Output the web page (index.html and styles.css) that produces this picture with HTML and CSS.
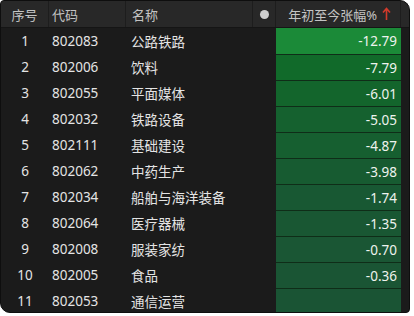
FILE: index.html
```html
<!DOCTYPE html>
<html lang="zh">
<head>
<meta charset="utf-8">
<link rel="stylesheet" href="styles.css">
</head>
<body>
<div class="panel">
  <div class="row head">
    <div class="c c1">序号</div>
    <div class="c c2">代码</div>
    <div class="c c3">名称</div>
    <div class="c c4"><span class="dot"></span></div>
    <div class="c c5">年初至今张幅%<svg class="arrow" width="9" height="14" viewBox="0 0 9 14"><path d="M4.5 13V2M1 5.5L4.5 1.5L8 5.5" fill="none" stroke="#d23a2b" stroke-width="1.6"/></svg></div>
    <div class="c c6"></div>
  </div>
  <div class="row"><div class="c c1">1</div><div class="c c2">802083</div><div class="c c3">公路铁路</div><div class="c c4"></div><div class="c c5 v" style="background:#1b8a38">-12.79</div><div class="c c6"></div></div>
  <div class="row"><div class="c c1">2</div><div class="c c2">802006</div><div class="c c3">饮料</div><div class="c c4"></div><div class="c c5 v" style="background:#116a2a">-7.79</div><div class="c c6"></div></div>
  <div class="row"><div class="c c1">3</div><div class="c c2">802055</div><div class="c c3">平面媒体</div><div class="c c4"></div><div class="c c5 v" style="background:#13652c">-6.01</div><div class="c c6"></div></div>
  <div class="row"><div class="c c1">4</div><div class="c c2">802032</div><div class="c c3">铁路设备</div><div class="c c4"></div><div class="c c5 v" style="background:#15612f">-5.05</div><div class="c c6"></div></div>
  <div class="row"><div class="c c1">5</div><div class="c c2">802111</div><div class="c c3">基础建设</div><div class="c c4"></div><div class="c c5 v" style="background:#165f30">-4.87</div><div class="c c6"></div></div>
  <div class="row"><div class="c c1">6</div><div class="c c2">802062</div><div class="c c3">中药生产</div><div class="c c4"></div><div class="c c5 v" style="background:#175b31">-3.98</div><div class="c c6"></div></div>
  <div class="row"><div class="c c1">7</div><div class="c c2">802034</div><div class="c c3">船舶与海洋装备</div><div class="c c4"></div><div class="c c5 v" style="background:#185833">-1.74</div><div class="c c6"></div></div>
  <div class="row"><div class="c c1">8</div><div class="c c2">802064</div><div class="c c3">医疗器械</div><div class="c c4"></div><div class="c c5 v" style="background:#195733">-1.35</div><div class="c c6"></div></div>
  <div class="row"><div class="c c1">9</div><div class="c c2">802008</div><div class="c c3">服装家纺</div><div class="c c4"></div><div class="c c5 v" style="background:#1a5634">-0.70</div><div class="c c6"></div></div>
  <div class="row"><div class="c c1">10</div><div class="c c2">802005</div><div class="c c3">食品</div><div class="c c4"></div><div class="c c5 v" style="background:#1a5534">-0.36</div><div class="c c6"></div></div>
  <div class="row last"><div class="c c1">11</div><div class="c c2">802053</div><div class="c c3">通信运营</div><div class="c c4"></div><div class="c c5 v" style="background:#1a5434"></div><div class="c c6"></div></div>
</div>
</body>
</html>
```
FILE: styles.css
```css
html, body {
  margin: 0;
  padding: 0;
  background: #ffffff;
}
body {
  width: 414px;
  height: 316px;
  overflow: hidden;
}
.panel {
  width: 408px;
  height: 311px;
  background: #1b1b1b;
  border: 1px solid #0e0e0e;
  border-radius: 4px 10px 4px 10px;
  overflow: hidden;
  font-family: "Noto Sans", "Noto Sans CJK SC", sans-serif;
  color: #e4e4e4;
}
.row {
  display: grid;
  grid-template-columns: 48px 77px 127px 23px 125px 1fr;
  height: 26px;
  font-size: 13.5px;
}
.row.head {
  height: 26px;
  background: #282828;
  color: #c4c4c4;
  font-size: 13px;
  border-bottom: 1px solid #151515;
}
.c {
  display: flex;
  align-items: center;
  white-space: nowrap;
}
.head .c {
  border-right: 1px solid #1d1d1d;
}
.head .c6 { border-right: none; }
.c1 { justify-content: center; }
.c2 { padding-left: 3px; }
.c3 { padding-left: 5px; }
.head .c2 { padding-left: 3px; }
.head .c3 { padding-left: 6px; }
.c4 { justify-content: center; }
.head .c5 { justify-content: flex-end; padding-right: 9px; }
.dot {
  width: 9px;
  height: 9px;
  border-radius: 50%;
  background: #cfcfcf;
}
.arrow {
  margin-left: 5px;
  margin-top: -1px;
}
.v {
  justify-content: flex-end;
  padding-right: 4px;
  color: #eef3ee;
  border-top: 1px solid #0f2d18;
}
.row:nth-child(2) .v { border-top: none; }
.last .v {
  border-bottom: 2px solid #6a1a1a;
}
```
